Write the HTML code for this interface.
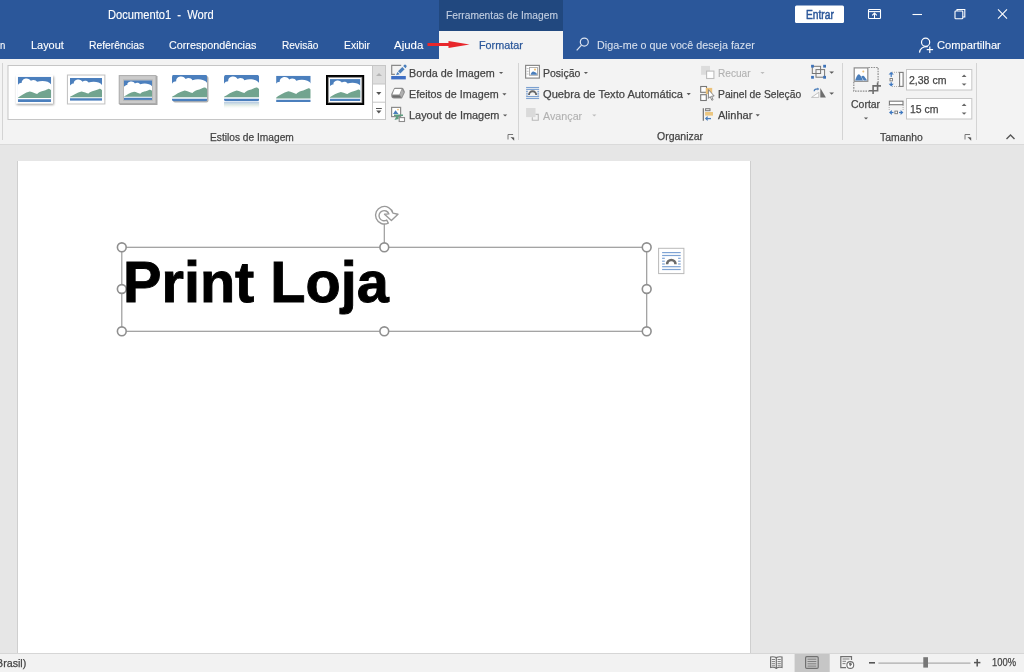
<!DOCTYPE html>
<html><head><meta charset="utf-8">
<style>
html,body{margin:0;padding:0;width:1024px;height:672px;overflow:hidden;background:#E6E6E6;font-family:"Liberation Sans",sans-serif;}
.a{position:absolute;}
.t{position:absolute;white-space:pre;transform-origin:0 0;}
svg{position:absolute;overflow:visible;}
</style></head><body>
<div class="a" style="left:0;top:0;width:1024px;height:59px;background:#2B579A"></div>
<div class="a" style="left:439px;top:0;width:124px;height:31px;background:#21487F"></div>
<div class="a" style="left:439px;top:31px;width:124px;height:28px;background:#F3F3F3"></div>
<div class="a" style="left:0;top:59px;width:1024px;height:85px;background:#F3F3F3"></div>
<div class="a" style="left:0;top:144px;width:1024px;height:1px;background:#DADADA"></div>
<div class="a" style="left:0;top:145px;width:1024px;height:508px;background:#E6E6E6"></div>
<div class="a" style="left:18px;top:161px;width:732px;height:492px;background:#FFFFFF;box-shadow:1px 0 0 #CFCFCF,-1px 0 0 #CFCFCF"></div>
<div class="a" style="left:0;top:653px;width:1024px;height:1px;background:#D6D6D6"></div>
<div class="a" style="left:0;top:654px;width:1024px;height:18px;background:#F2F2F2"></div>
<svg width="1024" height="672" style="left:0;top:0" viewBox="0 0 1024 672">
<defs>
 <symbol id="land" viewBox="0 0 100 75" preserveAspectRatio="none">
  <rect x="0" y="0" width="100" height="75" fill="#4B7FBD"/>
  <path d="M0,25 C3,20 8,18 12,18 C11,9 20,5 26,5 C32,5 37,9 39,12 C45,7 55,9 58,15 C72,10 93,12 100,23 L100,67 L0,67 Z" fill="#FFFFFF"/>
  <path d="M0,62 C10,56 22,47 36,44 C44,45 52,50 58,51 C62,47 66,45 72,43 C80,41 86,38 91,36 C94,35 97,37 100,40 L100,63.3 L0,63.3 Z" fill="#72A48F"/>
 </symbol>
 <filter id="blur1" x="-20%" y="-20%" width="140%" height="140%"><feGaussianBlur stdDeviation="0.9"/></filter>
 <filter id="blur05" x="-20%" y="-20%" width="140%" height="140%"><feGaussianBlur stdDeviation="0.5"/></filter>
 <linearGradient id="refl" x1="0" y1="0" x2="0" y2="1">
  <stop offset="0" stop-color="#4B7FBD" stop-opacity="0.45"/>
  <stop offset="0.5" stop-color="#9DBFA8" stop-opacity="0.25"/>
  <stop offset="1" stop-color="#FFFFFF" stop-opacity="0"/>
 </linearGradient>
</defs>

<!-- ===== title bar icons ===== -->
<rect x="795" y="5.5" width="49" height="17.5" rx="1.5" fill="#FFFFFF"/>
<g fill="none" stroke="#FFFFFF" stroke-width="1.1">
 <rect x="868.5" y="9.5" width="12" height="9" rx="0.8"/>
 <line x1="869" y1="11.6" x2="880" y2="11.6"/>
 <line x1="874.5" y1="18" x2="874.5" y2="13.2"/>
 <polyline points="872.2,15.3 874.5,13 876.8,15.3"/>
 <line x1="912.5" y1="14.5" x2="922" y2="14.5"/>
 <rect x="955" y="11" width="7.8" height="7.8" rx="0.8"/>
 <path d="M957,11 V9.5 H964.8 V17 H962.8"/>
 <line x1="998" y1="9.3" x2="1007" y2="18.6"/>
 <line x1="1007" y1="9.3" x2="998" y2="18.6"/>
</g>

<!-- ===== tab row ===== -->
<rect x="427.5" y="43" width="22" height="3" fill="#E8262B"/>
<path d="M448.5,41 L469.5,44.5 L448.5,48 Z" fill="#E8262B"/>
<g fill="none" stroke="#DCE4F0" stroke-width="1.2">
 <circle cx="584.3" cy="42.1" r="4"/>
 <line x1="581.5" y1="45.2" x2="576.7" y2="50.3"/>
</g>
<g fill="none" stroke="#FFFFFF" stroke-width="1.2">
 <circle cx="925.6" cy="42.3" r="4.1"/>
 <path d="M919.5,52.6 C920,48.5 923.5,46.4 927.8,46.6"/>
 <line x1="926.7" y1="49.6" x2="933.1" y2="49.6"/>
 <line x1="929.8" y1="46.5" x2="929.8" y2="52.9"/>
</g>

<!-- ===== ribbon separators ===== -->
<g stroke="#D4D4D4" stroke-width="1">
 <line x1="2.5" y1="63" x2="2.5" y2="140"/>
 <line x1="518.5" y1="63" x2="518.5" y2="140"/>
 <line x1="842.5" y1="63" x2="842.5" y2="140"/>
 <line x1="976.5" y1="63" x2="976.5" y2="140"/>
</g>

<!-- gallery -->
<rect x="8" y="65.5" width="377.5" height="54" fill="#FFFFFF" stroke="#C6C6C6" stroke-width="1"/>
<rect x="372.5" y="66" width="12.5" height="18" fill="#DEDEDE"/>
<g stroke="#C6C6C6" stroke-width="1" fill="none">
 <line x1="372.5" y1="65.5" x2="372.5" y2="119.5"/>
 <line x1="372.5" y1="84" x2="385.5" y2="84"/>
 <line x1="372.5" y1="102.2" x2="385.5" y2="102.2"/>
</g>
<path d="M376,76 L379,73 L382,76 Z" fill="#B4B4B4"/>
<path d="M376.2,92 L381.4,92 L378.8,95 Z" fill="#555555"/>
<line x1="376" y1="108.5" x2="381.8" y2="108.5" stroke="#555" stroke-width="1"/>
<path d="M376.2,110.5 L381.4,110.5 L378.8,113.5 Z" fill="#555555"/>

<!-- thumb 1 -->
<rect x="16.5" y="76.5" width="37.5" height="28.5" fill="#000" opacity="0.35" filter="url(#blur1)"/>
<rect x="15.8" y="75" width="37.2" height="28.7" fill="#FFFFFF"/>
<use href="#land" x="17.8" y="76.8" width="33.4" height="25.2"/>
<!-- thumb 2 -->
<rect x="67.6" y="75.2" width="37.1" height="28.6" fill="#FFFFFF" stroke="#C4C4C4" stroke-width="1.4" filter="url(#blur05)"/>
<rect x="68" y="75.6" width="36.3" height="27.8" fill="#FFFFFF"/>
<use href="#land" x="70" y="78" width="32" height="22.8"/>
<!-- thumb 3 -->
<rect x="119.5" y="76" width="38" height="29" fill="#000" opacity="0.35" filter="url(#blur05)"/>
<rect x="119.2" y="75.6" width="36.8" height="27.9" fill="#CBCBCB" stroke="#ABABAB" stroke-width="1"/>
<rect x="123.5" y="79.8" width="29" height="20.6" fill="none" stroke="#B5B5B5" stroke-width="0.8"/>
<use href="#land" x="124" y="80.3" width="28" height="19.6"/>
<!-- thumb 4 -->
<rect x="173" y="76" width="35.5" height="26.5" rx="2" fill="#000" opacity="0.3" filter="url(#blur05)"/>
<clipPath id="c4"><rect x="172" y="74.8" width="35.2" height="26.7" rx="2"/></clipPath>
<g clip-path="url(#c4)"><use href="#land" x="172" y="74.8" width="35.2" height="26.7"/></g>
<!-- thumb 5 -->
<clipPath id="c5"><rect x="224" y="74.8" width="35.1" height="26.7" rx="2.5"/></clipPath>
<g clip-path="url(#c5)"><use href="#land" x="224" y="74.8" width="35.1" height="26.7"/></g>
<rect x="224" y="101.8" width="35.1" height="7.5" fill="url(#refl)"/>
<!-- thumb 6 -->
<use href="#land" x="275.5" y="75.2" width="35.7" height="27.5"/>
<rect x="275.3" y="75" width="36.1" height="27.9" fill="none" stroke="#FFFFFF" stroke-width="1.8" filter="url(#blur05)"/>
<!-- thumb 7 -->
<rect x="326" y="75" width="38.2" height="30" fill="#000000"/>
<rect x="328.3" y="77.3" width="33.6" height="25.4" fill="#FFFFFF" stroke="#8A8A8A" stroke-width="0.8"/>
<use href="#land" x="329.8" y="79.1" width="30.7" height="22"/>

<!-- ===== Borda/Efeitos/Layout icons ===== -->
<path d="M401.2,65.3 H391.7 V74.3 H394.9" fill="none" stroke="#8A8A8A" stroke-width="1.2"/>
<path d="M398,71.2 L402.3,66.9 L404.6,69.2 L400.3,73.5 Z" fill="#4A7EBB"/>
<path d="M403.2,66 L404.4,64.8 Q405.2,64.2 406,65 L406.4,65.4 Q407,66.2 406.4,67 L405.5,68.3 Z" fill="#4A7EBB"/>
<path d="M397.4,71.9 L399.7,74.2 L396,75.2 Z" fill="#4A7EBB"/>
<rect x="391.2" y="76" width="14.6" height="3.4" fill="#3F6FC4"/>

<path d="M395,87.8 H402 Q403,87.8 403.5,88.8 L404.8,91.6 Q405,92.2 404.7,92.8 L402.2,98 Q401.8,98.6 401,98.6 H394 Q391.5,98.6 391.3,96.5 L391.2,95 Q391.1,94.3 391.5,93.5 L393.8,88.8 Q394.2,87.8 395,87.8 Z" fill="#8E8E8E"/>
<path d="M394.6,89.1 H401.6 L399.3,94.6 H392.4 Z" fill="#FFFFFF"/>
<path d="M401.9,89.3 L403.8,92.3 L401.7,97.2 L399.8,94.8 Z" fill="#B0B0B0"/>
<path d="M392.4,95.5 H399.3 L401.2,97.6 H394.2 Q392.5,97.6 392.4,96.5 Z" fill="#6E6E6E"/>
<rect x="391.6" y="107.4" width="9" height="9.2" fill="#FFFFFF" stroke="#8C8C8C" stroke-width="1.2"/>
<path d="M393,114 L395.5,110.3 L398.5,114 Z" fill="#4A7EBB"/>
<circle cx="398" cy="109.6" r="0.9" fill="#EDC27A"/>
<path d="M394,114.6 H403 V116 H398.6 V119 L394.5,120 L396.5,116 H394 Z" fill="#5E9E80"/>
<rect x="399.2" y="117.6" width="5.3" height="3.9" fill="#FFFFFF" stroke="#8C8C8C" stroke-width="1.1"/>

<g fill="#5A5A5A">
 <path d="M499,72 L503.2,72 L501.1,74.1 Z"/>
 <path d="M502.3,93.3 L506.5,93.3 L504.4,95.4 Z"/>
 <path d="M503,114.4 L507.2,114.4 L505.1,116.5 Z"/>
 <path d="M583.8,71.9 L588,71.9 L585.9,74 Z"/>
 <path d="M686.6,93.1 L690.8,93.1 L688.7,95.2 Z"/>
 <path d="M755.6,114.3 L759.8,114.3 L757.7,116.4 Z"/>
 <path d="M829.3,71.4 L834,71.4 L831.65,73.8 Z"/>
 <path d="M829.3,92.4 L834,92.4 L831.65,94.8 Z"/>
 <path d="M863.9,117.5 L868.1,117.5 L866,119.6 Z"/>
</g>
<g fill="#BDBDBD">
 <path d="M592.2,114.4 L596.4,114.4 L594.3,116.5 Z"/>
 <path d="M760.4,72 L764.6,72 L762.5,74.1 Z"/>
</g>

<!-- launchers -->
<g fill="none" stroke="#777" stroke-width="1">
 <path d="M513.1,134.5 H508 V139.5"/>
 <path d="M970.1,134.5 H965 V139.5"/>
</g>
<path d="M510.5,137 L514.2,140.7 L514.2,137.5 Z" fill="#555"/>
<path d="M967.5,137 L971.2,140.7 L971.2,137.5 Z" fill="#555"/>
<path d="M1006.5,139 L1010.5,135 L1014.5,139" fill="none" stroke="#555" stroke-width="1.4"/>

<!-- Posicao -->
<rect x="525.6" y="65.4" width="13.8" height="12.7" fill="#FFFFFF" stroke="#8A8A8A" stroke-width="1.2"/>
<rect x="529.5" y="67.5" width="8" height="7.8" fill="#FFFFFF" stroke="#A8A8A8" stroke-width="0.9"/>
<path d="M530.6,74.8 C531,72.8 532.2,71.5 533.3,71.6 C534.3,71.7 535,72.5 535.6,72.6 C536.4,72.8 536.9,73.8 537,74.8 Z" fill="#4A7EBB"/>
<circle cx="535" cy="69.6" r="1.1" fill="#EDC27A"/>
<g stroke="#C0C0C0" stroke-width="0.9"><line x1="526.6" y1="68.5" x2="528.6" y2="68.5"/><line x1="526.6" y1="71.3" x2="528.6" y2="71.3"/><line x1="526.6" y1="74" x2="528.6" y2="74"/></g>

<!-- Quebra -->
<g stroke="#7BA0D0" stroke-width="1.1">
 <line x1="526.1" y1="87.5" x2="539.1" y2="87.5"/>
 <line x1="526.1" y1="89.4" x2="539.1" y2="89.4"/>
 <line x1="526.1" y1="91.4" x2="527.8" y2="91.4"/><line x1="537.4" y1="91.4" x2="539.1" y2="91.4"/>
 <line x1="526.1" y1="93.2" x2="527.8" y2="93.2"/><line x1="537.4" y1="93.2" x2="539.1" y2="93.2"/>
 <line x1="526.1" y1="95" x2="527.8" y2="95"/><line x1="537.4" y1="95" x2="539.1" y2="95"/>
 <line x1="526.1" y1="96.6" x2="539.1" y2="96.6"/>
 <line x1="526.1" y1="98.5" x2="539.1" y2="98.5"/>
</g>
<path d="M529,94.9 A3.6,3.6 0 0 1 536.2,94.9" fill="none" stroke="#666" stroke-width="1.9"/>

<!-- Avancar -->
<rect x="526.1" y="108" width="9.4" height="9.1" fill="#DADADA"/>
<path d="M532.3,117.2 V120.2 H538.3 V114.4 H535.6" fill="none" stroke="#B9B9B9" stroke-width="1.1"/>

<!-- Recuar -->
<rect x="701.1" y="65.9" width="8.9" height="8.9" fill="#DCDCDC"/>
<rect x="706.6" y="71.1" width="7.3" height="7.4" fill="#FFFFFF" stroke="#BDBDBD" stroke-width="1.1"/>

<!-- Painel -->
<g fill="#FFFFFF" stroke="#777" stroke-width="1.1">
 <rect x="700.7" y="86.5" width="5.8" height="5.8"/>
 <rect x="700.7" y="94.7" width="5.6" height="5.8"/>
</g>
<rect x="705.8" y="87.9" width="6.4" height="6.1" fill="#EBC17A"/>
<path d="M708.4,89.6 V98.4 L710.2,96.6 L711.9,100.3 L713.1,99.7 L711.6,96.2 L714.2,96 Z" fill="#FFFFFF" stroke="#7A7A7A" stroke-width="0.9" stroke-linejoin="round"/>

<!-- Alinhar -->
<line x1="703.3" y1="108.2" x2="703.3" y2="120.8" stroke="#666" stroke-width="1.1"/>
<rect x="705.6" y="108.7" width="4.4" height="2" fill="none" stroke="#777" stroke-width="1"/>
<rect x="705.1" y="112" width="7.9" height="3.6" fill="#EBC680"/>
<line x1="706" y1="118.6" x2="711" y2="118.6" stroke="#4A7EBB" stroke-width="1.3"/>
<path d="M704.9,118.6 L707.6,116.1 L707.6,121.1 Z" fill="#4A7EBB"/>

<!-- Agrupar -->
<g fill="none" stroke="#777" stroke-width="1">
 <rect x="812.3" y="66.3" width="8.3" height="7.2"/>
 <rect x="816" y="69.6" width="8.6" height="7.6"/>
</g>
<g fill="#3D72B8">
 <rect x="811.1" y="64.8" width="2.8" height="2.8"/>
 <rect x="823.2" y="64.8" width="2.8" height="2.8"/>
 <rect x="811.1" y="75.9" width="2.8" height="2.8"/>
 <rect x="823.2" y="75.9" width="2.8" height="2.8"/>
</g>
<!-- Girar -->
<path d="M811.5,97.4 L818.8,92.3 L818.8,97.4 Z" fill="#FFFFFF" stroke="#BBBBBB" stroke-width="0.9"/>
<path d="M820.3,88 L820.3,97.4 L825.9,97.4 Z" fill="#6D6D6D"/>
<path d="M814.2,91.2 C814.2,89.6 815.6,88.8 818,88.9" fill="none" stroke="#4A7EBB" stroke-width="1.3"/>
<path d="M817.5,87.4 L819.2,88.9 L817.5,90.4 Z" fill="#4A7EBB"/>

<!-- Cortar -->
<g fill="none" stroke="#8E8E8E" stroke-width="1.2" stroke-dasharray="1.6 1">
 <path d="M868.3,67.5 H878.1 V83"/>
 <path d="M853.8,81.9 V91.1 H869"/>
</g>
<rect x="854.2" y="67.9" width="13.6" height="13.4" fill="#FFFFFF" stroke="#8C8C8C" stroke-width="1.2"/>
<path d="M855.2,80.4 C856,77.5 857.5,74.2 858.8,74.2 C860,74.2 861.8,77.6 863,80.4 Z" fill="#4A7EBB"/>
<path d="M861.2,76.8 C862,75.8 863,75.4 863.8,76 C864.8,77 866,78.6 867,80.4 H863.8 Z" fill="#4A7EBB"/>
<circle cx="863.3" cy="71.4" r="1" fill="#EDC27A"/>
<g fill="none" stroke="#6E6E6E" stroke-width="1.6">
 <path d="M877.6,82.6 V90.7 H869"/>
 <path d="M881,85.9 H873.1 V94"/>
</g>

<!-- size icons -->
<g fill="#3E78C0">
 <path d="M891.2,71.8 L893.8,74.6 L888.6,74.6 Z"/>
 <path d="M891.2,86.6 L893.8,83.8 L888.6,83.8 Z"/>
 <path d="M889,112.5 L891.8,109.9 L891.8,115.1 Z"/>
 <path d="M903.4,112.5 L900.6,109.9 L900.6,115.1 Z"/>
</g>
<g stroke="#3E78C0" stroke-width="1.2"><line x1="891.2" y1="74" x2="891.2" y2="77"/><line x1="891.2" y1="82.3" x2="891.2" y2="84.5"/><line x1="891" y1="112.5" x2="893.5" y2="112.5"/><line x1="899" y1="112.5" x2="901.5" y2="112.5"/></g>
<rect x="890" y="78.5" width="2.4" height="2.4" fill="#FFF" stroke="#777" stroke-width="0.9"/>
<rect x="894.9" y="111.1" width="2.6" height="2.6" fill="#FFF" stroke="#777" stroke-width="0.9"/>
<g stroke="#999" stroke-width="0.8" stroke-dasharray="1 1">
 <line x1="892" y1="72.3" x2="899" y2="72.3"/><line x1="892" y1="86.5" x2="899" y2="86.5"/>
 <line x1="889.2" y1="105" x2="889.2" y2="110"/><line x1="903.1" y1="105" x2="903.1" y2="110"/>
</g>
<rect x="899.6" y="72.4" width="3.5" height="14" fill="#FFF" stroke="#7A7A7A" stroke-width="1.1"/>
<rect x="889.4" y="101.2" width="13.6" height="3.5" fill="#FFF" stroke="#7A7A7A" stroke-width="1.1"/>

<rect x="906.5" y="69.5" width="65.3" height="20.5" fill="#FFFFFF" stroke="#C6C6C6" stroke-width="1"/>
<rect x="906.5" y="98.5" width="65.3" height="20.5" fill="#FFFFFF" stroke="#C6C6C6" stroke-width="1"/>
<g fill="#666">
 <path d="M961.7,77 L966.5,77 L964.1,74.6 Z"/>
 <path d="M961.7,83.4 L966.5,83.4 L964.1,85.8 Z"/>
 <path d="M961.7,106 L966.5,106 L964.1,103.6 Z"/>
 <path d="M961.7,112.4 L966.5,112.4 L964.1,114.8 Z"/>
</g>

<!-- ===== document selection ===== -->
<g fill="none" stroke="#9B9B9B" stroke-width="1.2">
 <rect x="121.8" y="247.3" width="524.9" height="84"/>
 <line x1="384.3" y1="224" x2="384.3" y2="247.3"/>
</g>
<g fill="#FFFFFF" stroke="#8F8F8F" stroke-width="1.6">
 <circle cx="121.8" cy="247.3" r="4.4"/><circle cx="384.3" cy="247.3" r="4.4"/><circle cx="646.7" cy="247.3" r="4.4"/>
 <circle cx="121.8" cy="289" r="4.4"/><circle cx="646.7" cy="289" r="4.4"/>
 <circle cx="121.8" cy="331.3" r="4.4"/><circle cx="384.3" cy="331.3" r="4.4"/><circle cx="646.7" cy="331.3" r="4.4"/>
</g>
<path d="M398,214.2 L392.9,213.1 A8.8,8.8 0 1 0 388.3,223.1 L386.7,220.1 A5.1,5.1 0 1 1 388.9,213.9 L384.5,214.2 L391.4,220.4 Z" fill="#FFFFFF" stroke="#9A9A9A" stroke-width="1.4" stroke-linejoin="round"/>
<rect x="658.6" y="248.3" width="25.3" height="25.3" fill="#FFFFFF" stroke="#B9B9B9" stroke-width="1"/>
<g stroke="#7EA3D4" stroke-width="1.2">
 <line x1="662.1" y1="252.6" x2="680.7" y2="252.6"/>
 <line x1="662.1" y1="255.5" x2="680.7" y2="255.5"/>
 <line x1="662.1" y1="258.3" x2="664.8" y2="258.3"/><line x1="678.1" y1="258.3" x2="680.7" y2="258.3"/>
 <line x1="662.1" y1="261.2" x2="664.8" y2="261.2"/><line x1="678.1" y1="261.2" x2="680.7" y2="261.2"/>
 <line x1="662.1" y1="264" x2="664.8" y2="264"/><line x1="678.1" y1="264" x2="680.7" y2="264"/>
 <line x1="662.1" y1="266.7" x2="680.7" y2="266.7"/>
 <line x1="662.1" y1="269.5" x2="680.7" y2="269.5"/>
</g>
<path d="M667.1,264.2 A4.2,4.2 0 0 1 675.5,264.2" fill="none" stroke="#6A6A6A" stroke-width="2.6"/>

<!-- ===== status bar ===== -->
<rect x="794.6" y="654" width="35.1" height="18" fill="#C6C6C6"/>
<g fill="none" stroke="#707070" stroke-width="1.2">
 <path d="M776.3,657.6 C774.5,656.7 772.5,656.6 770.6,657 V667.5 C772.5,667.1 774.5,667.2 776.3,668.1 C778.1,667.2 780.1,667.1 782,667.5 V657 C780.1,656.6 778.1,656.7 776.3,657.6 Z"/>
 <line x1="776.3" y1="657.6" x2="776.3" y2="669"/>
 <rect x="805.6" y="656.6" width="12.6" height="11.8" rx="1.2"/>
 <path d="M851.5,660 V656.6 H840.8 V667.6 H846"/>
</g>
<g stroke="#808080" stroke-width="1">
 <line x1="771.8" y1="659.5" x2="775" y2="659.5"/><line x1="777.6" y1="659.5" x2="780.8" y2="659.5"/>
 <line x1="771.8" y1="661.6" x2="775" y2="661.6"/><line x1="777.6" y1="661.6" x2="780.8" y2="661.6"/>
 <line x1="771.8" y1="663.7" x2="775" y2="663.7"/><line x1="777.6" y1="663.7" x2="780.8" y2="663.7"/>
 <line x1="771.8" y1="665.8" x2="775" y2="665.8"/><line x1="777.6" y1="665.8" x2="780.8" y2="665.8"/>
 <line x1="807.5" y1="659.2" x2="816.3" y2="659.2"/><line x1="807.5" y1="661.5" x2="816.3" y2="661.5"/>
 <line x1="807.5" y1="663.8" x2="816.3" y2="663.8"/><line x1="807.5" y1="666.1" x2="816.3" y2="666.1"/>
 <line x1="842.5" y1="659" x2="849.5" y2="659"/><line x1="842.5" y1="661.3" x2="846" y2="661.3"/><line x1="842.5" y1="663.6" x2="845.5" y2="663.6"/>
</g>
<circle cx="850.3" cy="665" r="3.4" fill="#FFF" stroke="#6F6F6F" stroke-width="1.1"/>
<path d="M848.8,663.3 L851,662.5 L852,664.5 L850,666.5 Z" fill="#6F6F6F"/>
<line x1="869" y1="662.8" x2="875" y2="662.8" stroke="#555" stroke-width="1.6"/>
<line x1="878.4" y1="663.1" x2="970.5" y2="663.1" stroke="#9A9A9A" stroke-width="1"/>
<rect x="923.3" y="657.2" width="4.7" height="10.4" fill="#777"/>
<g stroke="#555" stroke-width="1.5"><line x1="974" y1="662.6" x2="980.4" y2="662.6"/><line x1="977.2" y1="659" x2="977.2" y2="666.4"/></g>
</svg>

<div class="t" style="left:108.39px;top:9.38px;font-size:12.19px;line-height:12.19px;color:#FFFFFF;font-weight:normal;-webkit-text-stroke:0.12px #FFFFFF;transform:scaleX(0.9140)">Documento1  -  Word</div>
<div class="t" style="left:445.96px;top:9.76px;font-size:10.80px;line-height:10.80px;color:#C3CFE2;font-weight:normal;-webkit-text-stroke:0.12px #C3CFE2;transform:scaleX(0.9466)">Ferramentas de Imagem</div>
<div class="t" style="left:805.87px;top:8.79px;font-size:12.65px;line-height:12.65px;color:#2B579A;font-weight:normal;-webkit-text-stroke:0.5px #2B579A;transform:scaleX(0.8096)">Entrar</div>
<div class="t" style="left:-0.17px;top:40.17px;font-size:11.50px;line-height:11.50px;color:#FFFFFF;font-weight:normal;-webkit-text-stroke:0.12px #FFFFFF;transform:scaleX(0.8273)">n</div>
<div class="t" style="left:30.62px;top:40.17px;font-size:11.50px;line-height:11.50px;color:#FFFFFF;font-weight:normal;-webkit-text-stroke:0.12px #FFFFFF;transform:scaleX(0.9499)">Layout</div>
<div class="t" style="left:89.12px;top:40.17px;font-size:11.50px;line-height:11.50px;color:#FFFFFF;font-weight:normal;-webkit-text-stroke:0.12px #FFFFFF;transform:scaleX(0.8994)">Referências</div>
<div class="t" style="left:169.43px;top:40.17px;font-size:11.50px;line-height:11.50px;color:#FFFFFF;font-weight:normal;-webkit-text-stroke:0.12px #FFFFFF;transform:scaleX(0.9363)">Correspondências</div>
<div class="t" style="left:282.02px;top:40.17px;font-size:11.50px;line-height:11.50px;color:#FFFFFF;font-weight:normal;-webkit-text-stroke:0.12px #FFFFFF;transform:scaleX(0.8758)">Revisão</div>
<div class="t" style="left:343.82px;top:40.17px;font-size:11.50px;line-height:11.50px;color:#FFFFFF;font-weight:normal;-webkit-text-stroke:0.12px #FFFFFF;transform:scaleX(0.9039)">Exibir</div>
<div class="t" style="left:394.43px;top:40.17px;font-size:11.50px;line-height:11.50px;color:#FFFFFF;font-weight:normal;-webkit-text-stroke:0.12px #FFFFFF;transform:scaleX(0.9959)">Ajuda</div>
<div class="t" style="left:478.52px;top:40.07px;font-size:11.50px;line-height:11.50px;color:#2B579A;font-weight:normal;-webkit-text-stroke:0.25px #2B579A;transform:scaleX(0.9388)">Formatar</div>
<div class="t" style="left:596.62px;top:40.37px;font-size:11.50px;line-height:11.50px;color:#D5DEEC;font-weight:normal;-webkit-text-stroke:0.12px #D5DEEC;transform:scaleX(0.9350)">Diga-me o que você deseja fazer</div>
<div class="t" style="left:937.12px;top:39.77px;font-size:11.50px;line-height:11.50px;color:#FFFFFF;font-weight:normal;-webkit-text-stroke:0.12px #FFFFFF;transform:scaleX(0.9692)">Compartilhar</div>
<div class="t" style="left:409.22px;top:68.07px;font-size:11.50px;line-height:11.50px;color:#444444;font-weight:normal;-webkit-text-stroke:0.25px #444444;transform:scaleX(0.9374)">Borda de Imagem</div>
<div class="t" style="left:409.22px;top:89.37px;font-size:11.50px;line-height:11.50px;color:#444444;font-weight:normal;-webkit-text-stroke:0.25px #444444;transform:scaleX(0.9344)">Efeitos de Imagem</div>
<div class="t" style="left:409.22px;top:110.47px;font-size:11.50px;line-height:11.50px;color:#444444;font-weight:normal;-webkit-text-stroke:0.25px #444444;transform:scaleX(0.9479)">Layout de Imagem</div>
<div class="t" style="left:542.82px;top:67.77px;font-size:11.50px;line-height:11.50px;color:#444444;font-weight:normal;-webkit-text-stroke:0.25px #444444;transform:scaleX(0.9139)">Posição</div>
<div class="t" style="left:542.82px;top:89.07px;font-size:11.50px;line-height:11.50px;color:#444444;font-weight:normal;-webkit-text-stroke:0.25px #444444;transform:scaleX(0.9660)">Quebra de Texto Automática</div>
<div class="t" style="left:542.82px;top:110.77px;font-size:11.50px;line-height:11.50px;color:#B1B1B1;font-weight:normal;-webkit-text-stroke:0.12px #B1B1B1;transform:scaleX(0.9337)">Avançar</div>
<div class="t" style="left:717.92px;top:67.77px;font-size:11.50px;line-height:11.50px;color:#B1B1B1;font-weight:normal;-webkit-text-stroke:0.12px #B1B1B1;transform:scaleX(0.8765)">Recuar</div>
<div class="t" style="left:717.92px;top:89.17px;font-size:11.50px;line-height:11.50px;color:#444444;font-weight:normal;-webkit-text-stroke:0.25px #444444;transform:scaleX(0.8973)">Painel de Seleção</div>
<div class="t" style="left:717.92px;top:110.17px;font-size:11.50px;line-height:11.50px;color:#444444;font-weight:normal;-webkit-text-stroke:0.25px #444444;transform:scaleX(0.9606)">Alinhar</div>
<div class="t" style="left:851.42px;top:99.07px;font-size:11.50px;line-height:11.50px;color:#444444;font-weight:normal;-webkit-text-stroke:0.25px #444444;transform:scaleX(0.9107)">Cortar</div>
<div class="t" style="left:908.82px;top:75.07px;font-size:11.50px;line-height:11.50px;color:#444444;font-weight:normal;-webkit-text-stroke:0.25px #444444;transform:scaleX(0.9139)">2,38 cm</div>
<div class="t" style="left:909.52px;top:103.77px;font-size:11.50px;line-height:11.50px;color:#444444;font-weight:normal;-webkit-text-stroke:0.25px #444444;transform:scaleX(0.9097)">15 cm</div>
<div class="t" style="left:210.33px;top:131.77px;font-size:11.50px;line-height:11.50px;color:#444444;font-weight:normal;-webkit-text-stroke:0.25px #444444;transform:scaleX(0.8857)">Estilos de Imagem</div>
<div class="t" style="left:657.12px;top:131.47px;font-size:11.50px;line-height:11.50px;color:#444444;font-weight:normal;-webkit-text-stroke:0.25px #444444;transform:scaleX(0.9129)">Organizar</div>
<div class="t" style="left:880.32px;top:131.67px;font-size:11.50px;line-height:11.50px;color:#444444;font-weight:normal;-webkit-text-stroke:0.25px #444444;transform:scaleX(0.9046)">Tamanho</div>
<div class="t" style="left:-3.88px;top:657.87px;font-size:11.50px;line-height:11.50px;color:#444444;font-weight:normal;-webkit-text-stroke:0.25px #444444;transform:scaleX(0.9296)">Brasil)</div>
<div class="t" style="left:991.92px;top:657.17px;font-size:11.50px;line-height:11.50px;color:#444444;font-weight:normal;-webkit-text-stroke:0.25px #444444;transform:scaleX(0.8157)">100%</div>
<div class="t" style="left:123.40px;top:253.30px;font-size:58.00px;line-height:58.00px;color:#000000;font-weight:bold;-webkit-text-stroke:0.9px #000000;transform:scaleX(0.9938)">Print Loja</div>
</body></html>
